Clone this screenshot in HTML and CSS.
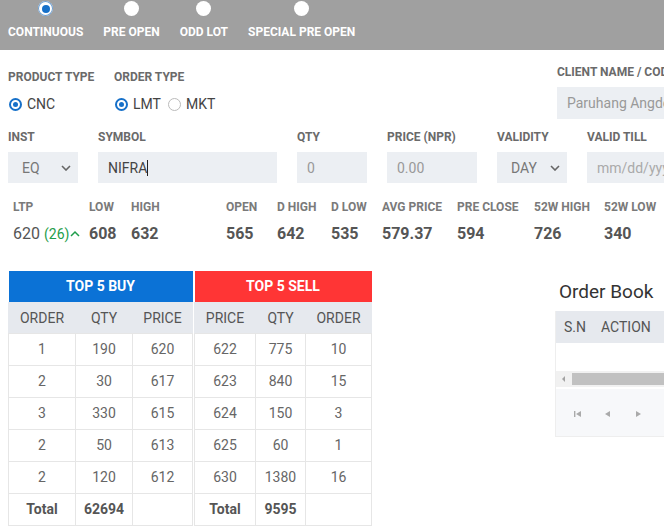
FILE: index.html
```html
<!DOCTYPE html>
<html>
<head>
<meta charset="utf-8">
<link rel="stylesheet" href="styles.css">
</head>
<body>
<div class="page">
  <div class="topbar">
    <div class="mode"><span class="tradio on"></span><span class="mlabel">CONTINUOUS</span></div>
    <div class="mode"><span class="tradio"></span><span class="mlabel">PRE OPEN</span></div>
    <div class="mode"><span class="tradio"></span><span class="mlabel">ODD LOT</span></div>
    <div class="mode"><span class="tradio"></span><span class="mlabel">SPECIAL PRE OPEN</span></div>
  </div>

  <div class="form">
    <div class="row1">
      <div class="grp pt">
        <div class="lbl">PRODUCT TYPE</div>
        <div class="radios"><span class="radio on"></span><span class="rtext">CNC</span></div>
      </div>
      <div class="grp pt">
        <div class="lbl">ORDER TYPE</div>
        <div class="radios"><span class="radio on"></span><span class="rtext">LMT</span><span class="radio off"></span><span class="rtext">MKT</span></div>
      </div>
      <div class="grp">
        <div class="lbl">CLIENT NAME / CODE</div>
        <div class="field client ph">Paruhang Angdembe</div>
      </div>
    </div>
    <div class="row2">
      <div class="grp"><div class="lbl">INST</div><div class="field sel"><span>EQ</span><svg width="10" height="6" viewBox="0 0 10 6"><polyline points="1,1 5,5 9,1" fill="none" stroke="#666" stroke-width="1.6"/></svg></div></div>
      <div class="grp"><div class="lbl">SYMBOL</div><div class="field val">NIFRA<span class="caret"></span></div></div>
      <div class="grp"><div class="lbl">QTY</div><div class="field ph">0</div></div>
      <div class="grp"><div class="lbl">PRICE (NPR)</div><div class="field ph">0.00</div></div>
      <div class="grp"><div class="lbl">VALIDITY</div><div class="field sel"><span>DAY</span><svg width="10" height="6" viewBox="0 0 10 6"><polyline points="1,1 5,5 9,1" fill="none" stroke="#666" stroke-width="1.6"/></svg></div></div>
      <div class="grp"><div class="lbl">VALID TILL</div><div class="field ph lt">mm/dd/yyyy</div></div>
    </div>
  </div>

  <div class="stats">
    <div class="stat"><div class="slbl">LTP</div><div class="sval ltp">620 <span class="chg">(26)</span><svg width="10" height="7" viewBox="0 0 10 7"><polyline points="1,6 5,2 9,6" fill="none" stroke="#1f9d4b" stroke-width="1.5"/></svg></div></div>
    <div class="stat"><div class="slbl">LOW</div><div class="sval">608</div></div>
    <div class="stat"><div class="slbl">HIGH</div><div class="sval">632</div></div>
    <div class="stat"><div class="slbl">OPEN</div><div class="sval">565</div></div>
    <div class="stat"><div class="slbl">D HIGH</div><div class="sval">642</div></div>
    <div class="stat"><div class="slbl">D LOW</div><div class="sval">535</div></div>
    <div class="stat"><div class="slbl">AVG PRICE</div><div class="sval">579.37</div></div>
    <div class="stat"><div class="slbl">PRE CLOSE</div><div class="sval">594</div></div>
    <div class="stat"><div class="slbl">52W HIGH</div><div class="sval">726</div></div>
    <div class="stat"><div class="slbl">52W LOW</div><div class="sval">340</div></div>
  </div>

  <div class="lower">
    <div class="depth">
      <table class="tbl buy">
        <colgroup><col class="c67"><col class="c57"><col class="c60"></colgroup>
        <tr><th colspan="3" class="cap buycap">TOP 5 BUY</th></tr>
        <tr class="hd"><td>ORDER</td><td>QTY</td><td>PRICE</td></tr>
        <tr><td>1</td><td>190</td><td>620</td></tr>
        <tr><td>2</td><td>30</td><td>617</td></tr>
        <tr><td>3</td><td>330</td><td>615</td></tr>
        <tr><td>2</td><td>50</td><td>613</td></tr>
        <tr><td>2</td><td>120</td><td>612</td></tr>
        <tr class="tot"><td>Total</td><td>62694</td><td></td></tr>
      </table>
      <table class="tbl sell">
        <colgroup><col class="c61"><col class="c50"><col class="c66"></colgroup>
        <tr><th colspan="3" class="cap sellcap">TOP 5 SELL</th></tr>
        <tr class="hd"><td>PRICE</td><td>QTY</td><td>ORDER</td></tr>
        <tr><td>622</td><td>775</td><td>10</td></tr>
        <tr><td>623</td><td>840</td><td>15</td></tr>
        <tr><td>624</td><td>150</td><td>3</td></tr>
        <tr><td>625</td><td>60</td><td>1</td></tr>
        <tr><td>630</td><td>1380</td><td>16</td></tr>
        <tr class="tot"><td>Total</td><td>9595</td><td></td></tr>
      </table>
    </div>
    <div class="book">
      <div class="btitle">Order Book</div>
      <div class="bgrid">
        <div class="bhead"><span class="sn">S.N</span><span>ACTION</span></div>
        <div class="bbody"></div>
        <div class="scroll"><span class="sarrow"></span><span class="thumb"></span></div>
        <div class="pager">
          <svg width="8" height="8" viewBox="0 0 8 8"><rect x="0" y="1" width="1.4" height="6" fill="#aaa"/><polygon points="7,1 7,7 2,4" fill="#aaa"/></svg>
          <svg width="8" height="8" viewBox="0 0 8 8"><polygon points="6,1 6,7 1,4" fill="#aaa"/></svg>
          <svg width="8" height="8" viewBox="0 0 8 8"><polygon points="2,1 2,7 7,4" fill="#aaa"/></svg>
        </div>
      </div>
    </div>
  </div>
</div>
</body>
</html>
```
FILE: styles.css
```css
* { box-sizing: border-box; }
html, body { margin: 0; padding: 0; background: #fff; overflow: hidden; }
body { font-family: Roboto, "Liberation Sans", Arial, sans-serif; color: #555; }
.page { width: 820px; }

.topbar { background: #a0a0a0; height: 50px; display: flex; gap: 20px; padding-left: 8px; }
.mode { display: flex; flex-direction: column; align-items: center; padding-top: 1px; }
.tradio { width: 15px; height: 15px; border-radius: 50%; background: #fff; display: flex; align-items: center; justify-content: center; }
.tradio.on { box-shadow: inset 0 0 0 1px #6f9fd0; }
.tradio.on::after { content: ""; width: 8px; height: 8px; border-radius: 50%; background: #1670c9; }
.mlabel { margin-top: 8px; font-size: 12px; font-weight: 700; color: #fff; line-height: 16px; }

.form { padding: 15px 8px 0 8px; }
.row1 { display: grid; grid-template-columns: 106px 443px 200px; }
.row2 { display: grid; grid-template-columns: 70px 179px 70px 90px 70px 120px; column-gap: 20px; margin-top: 10px; }
.grp.pt { padding-top: 4px; }
.lbl { font-size: 12px; font-weight: 700; color: #6a6a6a; line-height: 16px; white-space: nowrap; }
.row1 .grp:last-child .lbl { margin-top: -1px; }
.radios { display: flex; align-items: center; margin-top: 11px; height: 16px; }
.radio { width: 13px; height: 13px; border-radius: 50%; margin-left: 1px; display: flex; align-items: center; justify-content: center; }
.radio.on { border: 2px solid #1670c9; }
.radio.on::after { content: ""; width: 5px; height: 5px; border-radius: 50%; background: #1670c9; }
.radio.off { border: 1px solid #bbb; margin-left: 7px; }
.rtext { font-size: 14px; color: #444; margin-left: 5px; }
.field { margin-top: 7px; height: 31px; background: #eceff3; font-size: 14px; display: flex; align-items: center; padding-left: 10px; white-space: nowrap; overflow: hidden; }
.field.client { height: 32px; width: 200px; color: #aaa; }
.field.ph { color: #999; }
.field.lt { color: #aaa; }
.field.val { color: #444; }
.caret { display: inline-block; width: 1px; height: 16px; background: #222; }
.field.sel { color: #777; justify-content: space-between; padding: 0 7px 0 14px; }

.stats { display: grid; grid-template-columns: 76px 42px 95px 51px 54px 51px 75px 77px 70px 80px; padding-left: 13px; margin-top: 16px; }
.slbl { font-size: 12px; font-weight: 700; color: #7a7a7a; line-height: 16px; white-space: nowrap; }
.sval { margin-top: 9px; font-size: 16px; font-weight: 700; color: #555; line-height: 20px; white-space: nowrap; }
.sval.ltp { font-weight: 400; display: flex; align-items: center; }
.chg { font-size: 14px; color: #1f9d4b; margin-left: 4px; }
.sval.ltp svg { margin-left: 1px; margin-top: -2px; }

.lower { display: flex; margin-top: 27px; }
.depth { display: flex; gap: 1px; padding-left: 8px; }
.tbl { border-collapse: collapse; font-size: 14px; color: #666; }
.c67 { width: 67px; } .c57 { width: 57px; } .c60 { width: 60px; }
.c61 { width: 61px; } .c50 { width: 50px; } .c66 { width: 66px; }
.tbl td { height: 32px; text-align: center; border: 1px solid #e6e6e6; padding: 0; }
.cap { height: 31px; color: #fff; font-size: 14px; font-weight: 700; padding: 0; }
.buycap { background: #0b72d6; }
.sellcap { background: #ff3535; }
.tbl tr.hd td { background: #e6e9ee; color: #555; height: 31px; border-color: #e6e9ee; border-bottom-color: #e6e6e6; }
.tbl tr.tot td { font-weight: 700; color: #555; }

.book { margin-left: 183px; }
.btitle { font-size: 19px; color: #333; line-height: 24px; margin: 9px 0 0 4px; }
.bgrid { margin-top: 7px; width: 200px; border-left: 1px solid #eee; }
.bhead { height: 32px; background: #e6e9ee; display: flex; align-items: center; font-size: 14px; color: #555; gap: 15px; padding-left: 8px; }
.bbody { height: 28px; }
.scroll { height: 16px; background: #f1f1f1; display: flex; align-items: center; }
.sarrow { width: 0; height: 0; border-top: 3px solid transparent; border-bottom: 3px solid transparent; border-right: 3px solid #a3a3a3; margin-left: 6px; }
.thumb { flex: 1; height: 12px; background: #c1c1c1; margin-left: 7px; }
.pager { height: 48px; background: #f7f8fa; margin-top: 2px; display: flex; align-items: center; gap: 22px; padding: 2px 0 0 18px; border-bottom: 1px solid #eee; }
```
